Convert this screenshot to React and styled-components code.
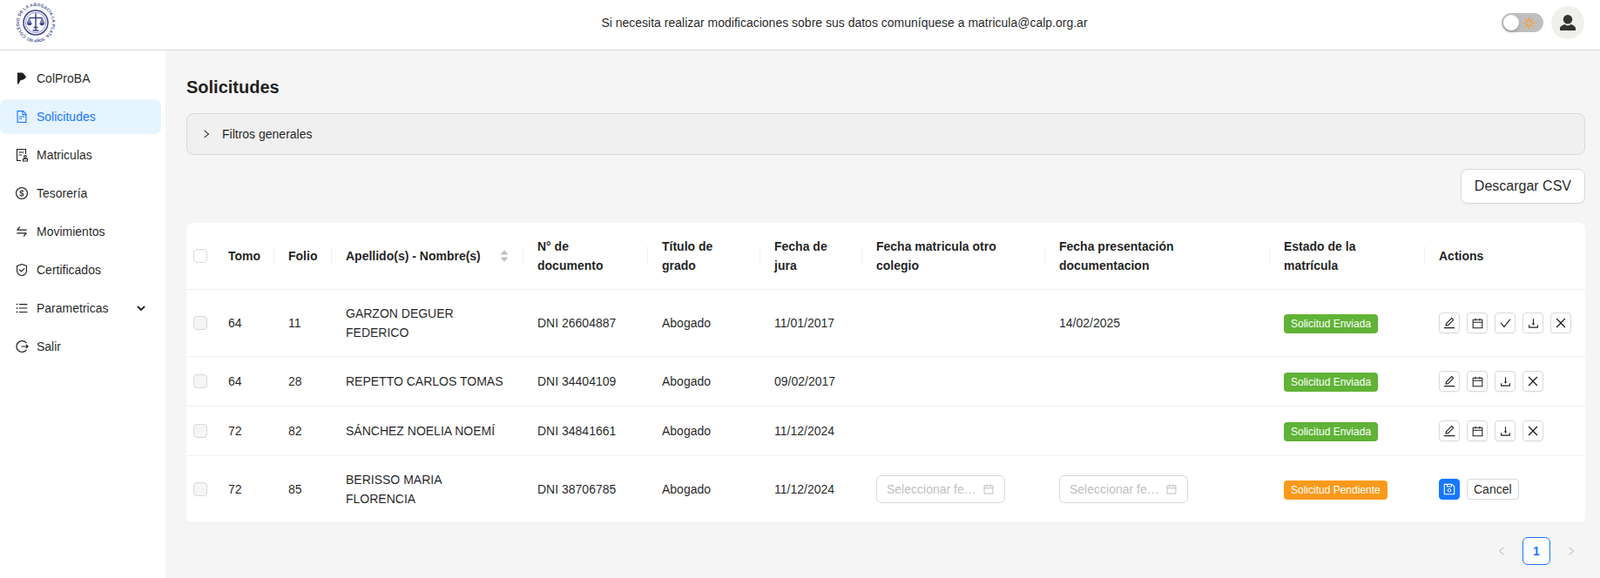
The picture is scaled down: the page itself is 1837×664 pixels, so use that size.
import React from 'react';
import styled, { createGlobalStyle } from 'styled-components';
import {
  AiOutlineFileText, AiOutlineDollarCircle, AiOutlineSwap, AiOutlineSafety, AiOutlineUnorderedList,
  AiOutlineEdit, AiOutlineCalendar, AiOutlineCheck, AiOutlineDownload, AiOutlineClose, AiOutlineSave,
  AiOutlineRight, AiOutlineLeft, AiFillCaretUp, AiFillCaretDown
} from 'react-icons/ai';

const GlobalStyle = createGlobalStyle`
  html, body { margin: 0; padding: 0; height: 100%; overflow: hidden; }
  body {
    font-family: "Liberation Sans", Arial, sans-serif;
    font-size: 14px;
    color: rgba(0, 0, 0, 0.88);
    background: #f5f5f5;
  }
  * { box-sizing: border-box; }
`;

const Page = styled.div`
  height: 664px;
  display: flex;
  flex-direction: column;
`;

const Header = styled.header`
  height: 58px;
  flex: 0 0 58px;
  display: flex;
  align-items: center;
  justify-content: space-between;
  padding: 0 18px 5px 17px;
  background: #fff;
  border-bottom: 1px solid #d9d9d9;
`;

const Notice = styled.div`
  margin-left: 150px;
  color: rgba(0, 0, 0, 0.88);
`;

const HeaderTools = styled.div`
  display: flex;
  align-items: center;
  gap: 9px;
`;

const Switch = styled.div`
  position: relative;
  width: 48px;
  height: 22px;
  border-radius: 11px;
  background: #bfbfbf;
  display: flex;
  align-items: center;
  justify-content: flex-end;
  padding-right: 9px;
`;

const Knob = styled.span`
  position: absolute;
  left: 2px;
  top: 2px;
  width: 18px;
  height: 18px;
  border-radius: 50%;
  background: #fff;
  box-shadow: 0 2px 4px rgba(0, 35, 11, 0.2);
`;

const Avatar = styled.div`
  width: 38px;
  height: 38px;
  border-radius: 50%;
  background: #f0efeb;
  display: flex;
  align-items: center;
  justify-content: center;
`;

const Body = styled.div`
  flex: 1;
  display: flex;
  min-height: 0;
`;

const Sidebar = styled.nav`
  width: 190px;
  flex: 0 0 190px;
  padding: 12px 5px 0 0;
  background: #fff;
`;

const MenuItem = styled.div`
  height: 40px;
  margin-bottom: 4px;
  padding-left: 17px;
  display: flex;
  align-items: center;
  gap: 9px;
  border-radius: 8px;
  color: ${props => (props.$active ? '#1677ff' : 'rgba(0, 0, 0, 0.88)')};
  background: ${props => (props.$active ? '#e6f4ff' : 'transparent')};

  svg { flex: 0 0 16px; }
`;

const MenuCaret = styled.span`
  margin-left: auto;
  margin-right: 18px;
  display: flex;

  svg { flex: 0 0 10px; }
`;

const Main = styled.main`
  flex: 1;
  min-width: 0;
  padding: 28px 17px 0 24px;
`;

const Title = styled.h1`
  margin: 0 0 16px;
  font-size: 20px;
  line-height: 28px;
  font-weight: 700;
`;

const Filters = styled.div`
  height: 48px;
  padding: 0 16px;
  display: flex;
  align-items: center;
  gap: 12px;
  background: #f0f0f0;
  border: 1px solid #d9d9d9;
  border-radius: 8px;
`;

const Toolbar = styled.div`
  display: flex;
  justify-content: flex-end;
  margin: 16px 0 22px;
`;

const CsvButton = styled.button`
  height: 40px;
  padding: 0 15px;
  font: inherit;
  font-size: 16px;
  color: rgba(0, 0, 0, 0.88);
  background: #fff;
  border: 1px solid #d9d9d9;
  border-radius: 8px;
  box-shadow: 0 2px 0 rgba(0, 0, 0, 0.02);
`;

const Table = styled.table`
  width: 100%;
  table-layout: fixed;
  border-collapse: separate;
  border-spacing: 0;
  background: #fff;
  border-radius: 8px;
`;

const Col = styled.col`
  width: ${props => props.$w}px;
`;

const Th = styled.th`
  position: relative;
  padding: 16px;
  padding-left: ${props => (props.$check ? '8px' : '16px')};
  padding-right: ${props => (props.$check ? '8px' : '16px')};
  text-align: left;
  font-weight: 700;
  line-height: 22px;
  border-bottom: 1px solid #f0f0f0;

  ${props => props.$divider && `
    &::before {
      content: '';
      position: absolute;
      top: 50%;
      right: 0;
      width: 1px;
      height: 22px;
      transform: translateY(-50%);
      background: #f0f0f0;
    }
  `}
`;

const Td = styled.td`
  padding: 16px;
  padding-left: ${props => (props.$check ? '8px' : '16px')};
  padding-right: ${props => (props.$check ? '8px' : '16px')};
  line-height: 22px;
  border-bottom: 1px solid #f0f0f0;
`;

const SortHead = styled.div`
  display: flex;
  align-items: center;
  justify-content: space-between;
`;

const SortIcons = styled.span`
  display: flex;
  flex-direction: column;
  color: #bfbfbf;

  svg { display: block; margin: -2px 0; }
`;

const Check = styled.input.attrs({ type: 'checkbox' })`
  appearance: none;
  display: block;
  width: 16px;
  height: 16px;
  margin: 0;
  border: 1px solid #d9d9d9;
  border-radius: 4px;
  background: ${props => (props.disabled ? '#f5f5f5' : '#fff')};
`;

const Tag = styled.span`
  display: inline-flex;
  align-items: center;
  height: 22px;
  padding: 0 8px;
  vertical-align: middle;
  font-size: 12px;
  line-height: 20px;
  color: #fff;
  border-radius: 4px;
  background: ${props => (props.$pending ? '#fa9a1b' : '#60b336')};
`;

const Actions = styled.div`
  display: flex;
  gap: 8px;
  height: 24px;
`;

const IconButton = styled.button`
  width: 24px;
  height: 24px;
  padding: 0;
  display: flex;
  align-items: center;
  justify-content: center;
  color: ${props => (props.$primary ? '#fff' : 'rgba(0, 0, 0, 0.88)')};
  background: ${props => (props.$primary ? '#1677ff' : '#fff')};
  border: 1px solid ${props => (props.$primary ? '#1677ff' : '#d9d9d9')};
  border-radius: 4px;
  box-shadow: 0 2px 0 rgba(0, 0, 0, 0.02);
`;

const CancelButton = styled.button`
  height: 24px;
  padding: 0 7px;
  font: inherit;
  color: rgba(0, 0, 0, 0.88);
  background: #fff;
  border: 1px solid #d9d9d9;
  border-radius: 4px;
  box-shadow: 0 2px 0 rgba(0, 0, 0, 0.02);
`;

const DateField = styled.div`
  width: 148px;
  height: 32px;
  padding: 0 11px;
  display: flex;
  align-items: center;
  gap: 4px;
  color: #bfbfbf;
  background: #fff;
  border: 1px solid #d9d9d9;
  border-radius: 6px;
`;

const DateInput = styled.input`
  flex: 1;
  min-width: 0;
  padding: 0;
  border: 0;
  outline: 0;
  font: inherit;
  text-overflow: ellipsis;

  &::placeholder { color: #bfbfbf; opacity: 1; }
`;

const Pager = styled.div`
  display: flex;
  justify-content: flex-end;
  gap: 8px;
  margin-top: 16px;
`;

const PageArrow = styled.span`
  width: 32px;
  height: 32px;
  display: flex;
  align-items: center;
  justify-content: center;
  color: #bfbfbf;
`;

const PageNumber = styled.span`
  width: 32px;
  height: 32px;
  display: flex;
  align-items: center;
  justify-content: center;
  font-weight: 700;
  color: #1677ff;
  background: #fff;
  border: 1px solid #1677ff;
  border-radius: 6px;
`;

const Logo = () => (
  <svg width="48" height="48" viewBox="0 0 48 48" aria-label="Colegio de la Abogacía La Plata">
    <defs>
      <path id="logoRing" d="M 13.1 39.6 A 19 19 0 1 1 34.900 39.6" />
      <path id="logoBase" d="M 12.75 43.500 A 22.500 22.500 0 0 0 35.250 43.500" />
    </defs>
    <text fill="#4a4f97" fontSize="4.9" fontWeight="700" fontFamily="'Liberation Sans', sans-serif">
      <textPath href="#logoRing" textLength="95">COLEGIO DE LA ABOGACÍA LA PLATA</textPath>
    </text>
    <text fill="#4a4f97" fontSize="4.6" fontWeight="700" fontFamily="'Liberation Sans', sans-serif" textAnchor="middle">
      <textPath href="#logoBase" startOffset="50%">100 AÑOS</textPath>
    </text>
    <circle cx="24" cy="24" r="14" fill="none" stroke="#3b3f8f" strokeWidth="1.500" />
    <circle cx="24" cy="24" r="11.700" fill="none" stroke="#3b3f8f" strokeWidth="0.600" />
    <path d="M24 13.500v19M20.500 33h7M21.500 29.500h5M16.500 18.500h15" stroke="#3b3f8f" strokeWidth="1.500" fill="none" />
    <path d="M16.500 18.500l-2.500 6h5zM31.500 18.500l-2.500 6h5z" stroke="#3b3f8f" strokeWidth="0.500" fill="#7f83b8" />
    <path d="M14 24.500a2.800 2.800 0 0 0 5.600 0zM28.400 24.500a2.800 2.800 0 0 0 5.600 0z" fill="#3b3f8f" />
  </svg>
);

const SunIcon = () => (
  <svg width="15" height="15" viewBox="0 0 16 16" fill="none" stroke="#f5a033" strokeWidth="1.300">
    <circle cx="8" cy="8" r="3.300" />
    <path d="M8 .6v3M8 12.400v3M.6 8h3M12.400 8h3M2.800 2.800l2.100 2.100M11.100 11.100l2.100 2.100M2.800 13.200l2.100-2.100M11.100 4.900l2.100-2.100" />
  </svg>
);

const UserIcon = () => (
  <svg width="18" height="18" viewBox="0 0 18 18" fill="#333">
    <circle cx="9" cy="5.300" r="5.200" />
    <path d="M0 18v-2.500c0-2 2.500-3.500 5.500-4.500.9.9 2.200 1.400 3.500 1.400s2.600-.5 3.500-1.400c3 1 5.500 2.500 5.500 4.500V18z" />
  </svg>
);

const ProvinceIcon = () => (
  <svg width="16" height="16" viewBox="0 0 16 16" fill="#1f1f1f">
    <path d="M3 1.500h5.500c1 .3 1.700 1.300 2.300 2.100l2 2.500c.2.400-.2 1.300-1.200 2.200-1.200 1-2.800 1.600-4.400 1.700-.9.300-1.400.9-1.500 1.800L4.300 14.500H3z" />
  </svg>
);

const RegistryIcon = () => (
  <svg width="16" height="16" viewBox="0 0 16 16" fill="none" stroke="#1f1f1f" strokeWidth="1.100">
    <path d="M7 14.500H2.500v-13h10V7" />
    <path d="M4.500 5h6M4.500 8h3.500" />
    <circle cx="12" cy="10" r="1.400" />
    <path d="M9.500 15v-2.500h5V15z" />
  </svg>
);

const LogoutIcon = () => (
  <svg width="16" height="16" viewBox="0 0 16 16" fill="none" stroke="#1f1f1f" strokeWidth="1.200">
    <path d="M13.500 4.200A6.400 6.400 0 1 0 13.500 11.800" />
    <path d="M7.500 8H15M13 6l2 2-2 2" />
  </svg>
);

const menu = [
  { label: 'ColProBA', icon: <ProvinceIcon /> },
  { label: 'Solicitudes', icon: <AiOutlineFileText size={16} />, active: true },
  { label: 'Matriculas', icon: <RegistryIcon /> },
  { label: 'Tesorería', icon: <AiOutlineDollarCircle size={16} /> },
  { label: 'Movimientos', icon: <AiOutlineSwap size={16} /> },
  { label: 'Certificados', icon: <AiOutlineSafety size={16} /> },
  { label: 'Parametricas', icon: <AiOutlineUnorderedList size={16} />, caret: true },
  { label: 'Salir', icon: <LogoutIcon /> }
];

const columns = [
  { label: 'Tomo', width: 69 },
  { label: 'Folio', width: 66 },
  { label: 'Apellido(s) - Nombre(s)', width: 220, sortable: true },
  { label: 'N° de documento', width: 143 },
  { label: 'Título de grado', width: 129 },
  { label: 'Fecha de jura', width: 117 },
  { label: 'Fecha matricula otro colegio', width: 210 },
  { label: 'Fecha presentación documentacion', width: 258 },
  { label: 'Estado de la matrícula', width: 178 },
  { label: 'Actions', width: 184 }
];

const rows = [
  { tomo: '64', folio: '11', name: 'GARZON DEGUER FEDERICO', doc: 'DNI 26604887', jura: '11/01/2017', presentacion: '14/02/2025', approve: true },
  { tomo: '64', folio: '28', name: 'REPETTO CARLOS TOMAS', doc: 'DNI 34404109', jura: '09/02/2017' },
  { tomo: '72', folio: '82', name: 'SÁNCHEZ NOELIA NOEMÍ', doc: 'DNI 34841661', jura: '11/12/2024' },
  { tomo: '72', folio: '85', name: 'BERISSO MARIA FLORENCIA', doc: 'DNI 38706785', jura: '11/12/2024', editing: true }
];

const DatePicker = () => (
  <DateField>
    <DateInput readOnly placeholder="Seleccionar fecha" />
    <AiOutlineCalendar size={14} />
  </DateField>
);

const App = () => (
  <Page>
    <GlobalStyle />
    <Header>
      <Logo />
      <Notice>Si necesita realizar modificaciones sobre sus datos comuníquese a matricula@calp.org.ar</Notice>
      <HeaderTools>
        <Switch>
          <Knob />
          <SunIcon />
        </Switch>
        <Avatar><UserIcon /></Avatar>
      </HeaderTools>
    </Header>
    <Body>
      <Sidebar>
        {menu.map((item) => (
          <MenuItem key={item.label} $active={item.active}>
            {item.icon}
            <span>{item.label}</span>
            {item.caret && (
              <MenuCaret>
                <svg width="10" height="10" viewBox="0 0 10 10" fill="none" stroke="#1f1f1f" strokeWidth="1.800">
                  <path d="M1 3l4 4 4-4" />
                </svg>
              </MenuCaret>
            )}
          </MenuItem>
        ))}
      </Sidebar>
      <Main>
        <Title>Solicitudes</Title>
        <Filters>
          <AiOutlineRight size={12} />
          <span>Filtros generales</span>
        </Filters>
        <Toolbar>
          <CsvButton>Descargar CSV</CsvButton>
        </Toolbar>
        <Table>
          <colgroup>
            <Col $w={32} />
            {columns.map((column) => <Col key={column.label} $w={column.width} />)}
          </colgroup>
          <thead>
            <tr>
              <Th $check><Check /></Th>
              {columns.map((column, index) => (
                <Th key={column.label} $divider={index < columns.length - 1}>
                  {column.sortable ? (
                    <SortHead>
                      {column.label}
                      <SortIcons>
                        <AiFillCaretUp size={12} />
                        <AiFillCaretDown size={12} />
                      </SortIcons>
                    </SortHead>
                  ) : column.label}
                </Th>
              ))}
            </tr>
          </thead>
          <tbody>
            {rows.map((row) => (
              <tr key={row.folio}>
                <Td $check><Check disabled /></Td>
                <Td>{row.tomo}</Td>
                <Td>{row.folio}</Td>
                <Td>{row.name}</Td>
                <Td>{row.doc}</Td>
                <Td>Abogado</Td>
                <Td>{row.jura}</Td>
                <Td>{row.editing && <DatePicker />}</Td>
                <Td>{row.editing ? <DatePicker /> : row.presentacion}</Td>
                <Td>
                  <Tag $pending={row.editing}>{row.editing ? 'Solicitud Pendiente' : 'Solicitud Enviada'}</Tag>
                </Td>
                <Td>
                  {row.editing ? (
                    <Actions>
                      <IconButton $primary><AiOutlineSave size={16} /></IconButton>
                      <CancelButton>Cancel</CancelButton>
                    </Actions>
                  ) : (
                    <Actions>
                      <IconButton><AiOutlineEdit size={16} /></IconButton>
                      <IconButton><AiOutlineCalendar size={15} /></IconButton>
                      {row.approve && <IconButton><AiOutlineCheck size={15} /></IconButton>}
                      <IconButton><AiOutlineDownload size={15} /></IconButton>
                      <IconButton><AiOutlineClose size={16} /></IconButton>
                    </Actions>
                  )}
                </Td>
              </tr>
            ))}
          </tbody>
        </Table>
        <Pager>
          <PageArrow><AiOutlineLeft size={12} /></PageArrow>
          <PageNumber>1</PageNumber>
          <PageArrow><AiOutlineRight size={12} /></PageArrow>
        </Pager>
      </Main>
    </Body>
  </Page>
);

export default App;
